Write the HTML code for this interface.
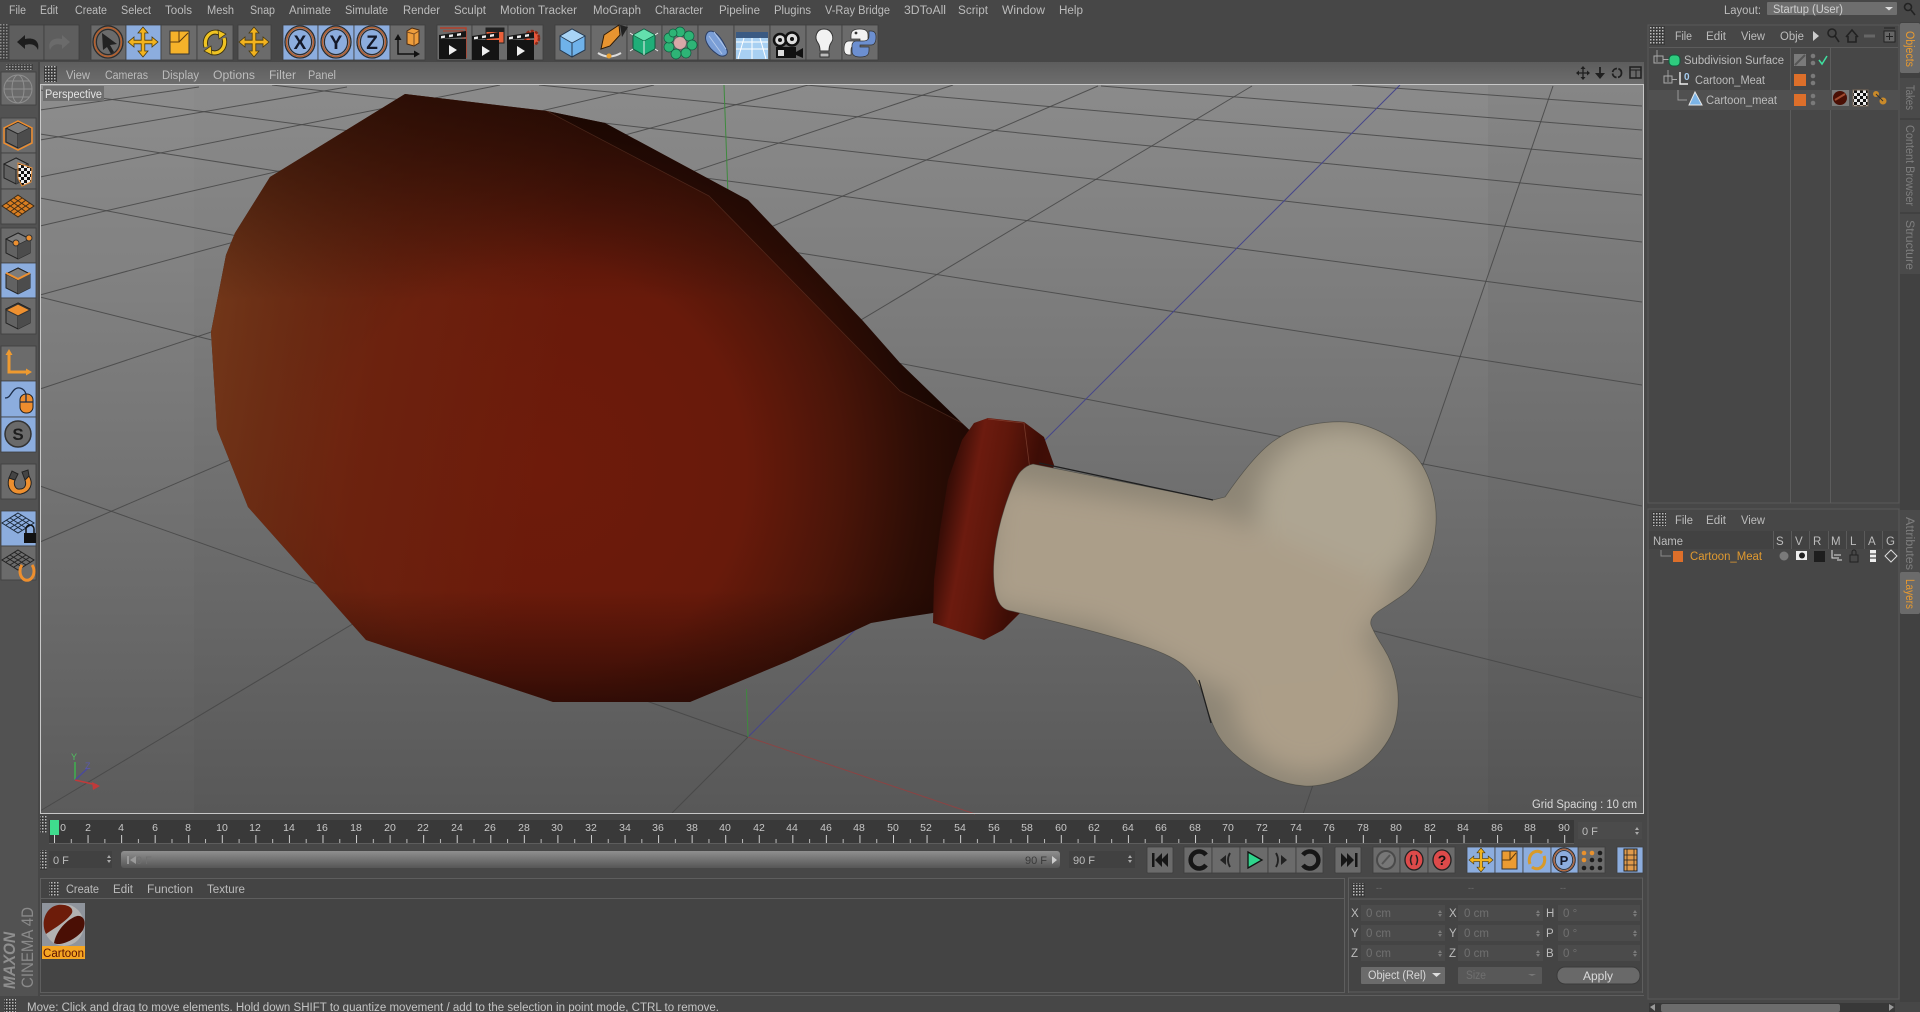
<!DOCTYPE html>
<html lang="en"><head><meta charset="utf-8"><title>Cinema 4D</title>
<style>
html,body{margin:0;padding:0;background:#474747;overflow:hidden;width:1920px;height:1012px}
svg{display:block}
text{font-family:"Liberation Sans",sans-serif;font-size:11.5px;fill:#bcbcbc}
.d{fill:#707070}.k{fill:#c8c8c8;font-size:10.5px}
.b{fill:#6b6b6b;stroke:#3e3e3e;stroke-width:.8}.l{fill:#8cadde;stroke:#3e3e3e;stroke-width:.8}
.g{stroke:#464646;stroke-width:1;fill:none;opacity:.85}
.f{fill:#4b4b4b}.s{fill:none;stroke:#2d2d2d}
</style></head><body>
<svg xmlns="http://www.w3.org/2000/svg" width="1920" height="1012" viewBox="0 0 1920 1012">
<defs>
<pattern id="grip" width="3" height="3" patternUnits="userSpaceOnUse"><rect width="3" height="3" fill="#3a3a3a"/><rect width="1.5" height="1.5" fill="#bdbdbd"/></pattern>
<pattern id="tick" x="54" y="0" width="33.56" height="1012" patternUnits="userSpaceOnUse"><rect x="0" y="835" width="1" height="8" fill="#d0d0d0"/><rect x="16.8" y="839" width="1" height="4" fill="#bcbcbc"/></pattern>
<pattern id="chk" width="6" height="6" patternUnits="userSpaceOnUse"><rect width="6" height="6" fill="#eee"/><rect width="3" height="3" fill="#111"/><rect x="3" y="3" width="3" height="3" fill="#111"/></pattern>
<linearGradient id="vp" x1="0" y1="0" x2="0" y2="1"><stop offset="0" stop-color="#8b8b8b"/><stop offset=".45" stop-color="#757575"/><stop offset="1" stop-color="#585858"/></linearGradient>
<linearGradient id="hd" x1="0" y1="0" x2="0" y2="1"><stop offset="0" stop-color="#5d5d5d"/><stop offset="1" stop-color="#6d6d6d"/></linearGradient>
<linearGradient id="sl" x1="0" y1="0" x2="0" y2="1"><stop offset="0" stop-color="#8f8f8f"/><stop offset="1" stop-color="#565656"/></linearGradient>
<radialGradient id="meat" gradientUnits="userSpaceOnUse" cx="540" cy="470" r="490"><stop offset="0" stop-color="#6e1b0b"/><stop offset=".42" stop-color="#681a0b"/><stop offset=".62" stop-color="#4a1509"/><stop offset=".78" stop-color="#2c0d05"/><stop offset=".92" stop-color="#1c0703"/><stop offset="1" stop-color="#120402"/></radialGradient>
<linearGradient id="mb" gradientUnits="userSpaceOnUse" x1="210" y1="300" x2="560" y2="360"><stop offset="0" stop-color="#7a3c1c" stop-opacity=".9"/><stop offset=".5" stop-color="#702a12" stop-opacity=".5"/><stop offset="1" stop-color="#702a12" stop-opacity="0"/></linearGradient>
<linearGradient id="mt" gradientUnits="userSpaceOnUse" x1="0" y1="94" x2="0" y2="300"><stop offset="0" stop-color="#200903" stop-opacity=".75"/><stop offset="1" stop-color="#200903" stop-opacity="0"/></linearGradient>
<linearGradient id="mz" gradientUnits="userSpaceOnUse" x1="0" y1="590" x2="0" y2="704"><stop offset="0" stop-color="#120402" stop-opacity="0"/><stop offset="1" stop-color="#120402" stop-opacity=".6"/></linearGradient>
<linearGradient id="col" gradientUnits="userSpaceOnUse" x1="925" y1="520" x2="1060" y2="545"><stop offset="0" stop-color="#160603"/><stop offset=".14" stop-color="#3c0e07"/><stop offset=".3" stop-color="#6c1b0f"/><stop offset=".48" stop-color="#5f170b"/><stop offset=".72" stop-color="#3d0d06"/><stop offset="1" stop-color="#480f07"/></linearGradient>
<filter id="bl" x="-30%" y="-30%" width="160%" height="160%"><feGaussianBlur stdDeviation="13"/></filter>
<clipPath id="bone"><path d="M1033 464L1213 500L1225 497Q1254 455 1273 441.500Q1292 428 1311.500 424.500Q1331 421 1346.500 422Q1362 423 1380 431.500Q1398 440 1411 451.500Q1424 463 1431 485Q1438 507 1435.500 530Q1433 553 1423.500 570Q1414 587 1403.500 594.500Q1393 602 1381 609.500Q1369 617 1371 625Q1374 633 1383.500 648Q1393 663 1396.500 681.500Q1400 700 1396.500 718.500Q1393 737 1378.500 753.500Q1364 770 1342.500 778.500Q1321 787 1304.500 786Q1288 785 1271 777.500Q1254 770 1239.500 758.500Q1225 747 1218 735Q1211 723 1205 701.500Q1199 680 1186 667.500Q1173 655 1137 644Q1101 633 1060.500 623Q1020 613 1009 610.500Q998 608 995 590.500Q992 573 995 550Q998 527 1006.500 502Q1015 477 1021 471Q1027 465 1033 464Z"/></clipPath>
<clipPath id="th"><rect x="42" y="903" width="43" height="43"/></clipPath>
<g id="mv"><path d="M0-15 5-9H1.800V-1.800H9V-5L15 0 9 5V1.800H1.800V9H5L0 15-5 9H-1.800V1.800H-9V5L-15 0-9-5V-1.800H-1.800V-9H-5Z" fill="#f2b31e" stroke="#4a3a10" stroke-width=".8"/></g>
<g id="ring"><ellipse rx="15" ry="16" fill="none" stroke="#2c2c2c" stroke-width="1.300"/><ellipse rx="13.400" ry="14.400" fill="none" stroke="#b4602e" stroke-width="1.600"/><ellipse rx="11.600" ry="12.600" fill="none" stroke="#2c2c2c" stroke-width="1.200"/></g>
<g id="clap"><rect x="-14" y="-5" width="27" height="20" fill="#141414"/><path d="M-14-9 13-13V-7L-14-5Z" fill="#161616"/><path d="M-12-8-8-8.600-8-6.200-12-5.600ZM-4-9.200 0-9.800 0-7.400-4-6.800ZM4-10.400 8-11 8-8.600 4-8Z" fill="#eee"/><path d="M-4 1 4 6-4 11Z" fill="#eee"/></g>
<g id="cube"><path d="M0-13 12-7V7L0 13-12 7V-7Z" fill="#626262" stroke="#222" stroke-width="1"/><path d="M0-13 12-7 0-1-12-7Z" fill="#7c7c7c" stroke="#222" stroke-width="1"/><path d="M0-1V13" stroke="#222"/><path d="M0-1 12-7V7L0 13Z" fill="#4c4c4c"/></g>
</defs>

<rect width="1920" height="1012" fill="#474747"/>
<!-- menu -->
<text x="9" y="14" textLength="17" lengthAdjust="spacingAndGlyphs">File</text><text x="40" y="14" textLength="18" lengthAdjust="spacingAndGlyphs">Edit</text><text x="75" y="14" textLength="32" lengthAdjust="spacingAndGlyphs">Create</text><text x="121" y="14" textLength="30" lengthAdjust="spacingAndGlyphs">Select</text><text x="165" y="14" textLength="27" lengthAdjust="spacingAndGlyphs">Tools</text><text x="207" y="14" textLength="27" lengthAdjust="spacingAndGlyphs">Mesh</text><text x="250" y="14" textLength="25" lengthAdjust="spacingAndGlyphs">Snap</text><text x="289" y="14" textLength="42" lengthAdjust="spacingAndGlyphs">Animate</text><text x="345" y="14" textLength="43" lengthAdjust="spacingAndGlyphs">Simulate</text><text x="403" y="14" textLength="37" lengthAdjust="spacingAndGlyphs">Render</text><text x="454" y="14" textLength="32" lengthAdjust="spacingAndGlyphs">Sculpt</text><text x="500" y="14" textLength="77" lengthAdjust="spacingAndGlyphs">Motion Tracker</text><text x="593" y="14" textLength="48" lengthAdjust="spacingAndGlyphs">MoGraph</text><text x="655" y="14" textLength="48" lengthAdjust="spacingAndGlyphs">Character</text><text x="719" y="14" textLength="41" lengthAdjust="spacingAndGlyphs">Pipeline</text><text x="774" y="14" textLength="37" lengthAdjust="spacingAndGlyphs">Plugins</text><text x="825" y="14" textLength="65" lengthAdjust="spacingAndGlyphs">V-Ray Bridge</text><text x="904" y="14" textLength="42" lengthAdjust="spacingAndGlyphs">3DToAll</text><text x="958" y="14" textLength="30" lengthAdjust="spacingAndGlyphs">Script</text><text x="1002" y="14" textLength="43" lengthAdjust="spacingAndGlyphs">Window</text><text x="1059" y="14" textLength="24" lengthAdjust="spacingAndGlyphs">Help</text>
<text x="1724" y="14" textLength="37" lengthAdjust="spacingAndGlyphs">Layout:</text>
<rect x="1767" y="2" width="130" height="13" rx="1" fill="#6e6e6e"/><text x="1773" y="13" textLength="70" lengthAdjust="spacingAndGlyphs" style="fill:#cfcfcf">Startup (User)</text><path d="M1885 7h8l-4 3.500z" fill="#ddd"/>
<g fill="none" stroke="#222" stroke-width="1.600"><circle cx="1908" cy="7" r="3.500"/><path d="M1911 10l4 5"/></g>

<!-- top toolbar -->
<rect x="0" y="24" width="8" height="36" fill="url(#grip)" opacity=".6"/>
<rect x="9" y="25" width="35" height="35" class="b" style="fill:#5e5e5e"/><rect x="44" y="25" width="35" height="35" class="b" style="fill:#5e5e5e"/>
<path d="M17 42 25 35V39C34 37 40 41 38 50 36 45 32 43 25 45V49Z" fill="#1d1d1d"/><path d="M70 42 62 35V39C54 37 47 41 50 50 52 45 56 43 62 45V49Z" fill="#6b6b6b"/>
<rect x="91" y="25" width="35" height="35" class="b"/><rect x="126" y="25" width="35" height="35" class="l"/><rect x="161" y="25" width="36" height="35" class="b"/><rect x="197" y="25" width="36" height="35" class="b"/><rect x="238" y="25" width="33" height="35" class="b"/>
<use href="#ring" x="108" y="42"/><path d="M102 33 117 44 110 45 114 52 111 54 107 47 103 50Z" fill="#222"/>
<use href="#mv" x="143" y="42"/><rect x="170" y="31" width="19" height="23" fill="#f5b22a" stroke="#333"/><path d="M170 42h9V31M179 42l9-9" stroke="#5a3a10" fill="none"/>
<g fill="none" stroke="#3a3010" stroke-width="5"><path d="M221 34A10 11 0 0 0 206 47"/><path d="M209 51A10 11 0 0 0 224 38"/></g><g fill="none" stroke="#efc322" stroke-width="3.200"><path d="M221 34A10 11 0 0 0 206 47"/><path d="M209 51A10 11 0 0 0 224 38"/></g><path d="M218 30 226 34 219 39ZM212 55 204 51 211 46Z" fill="#efc322" stroke="#3a3010" stroke-width=".7"/>
<use href="#mv" x="254" y="42"/>
<rect x="283" y="25" width="35" height="35" class="l"/><rect x="318" y="25" width="36" height="35" class="l"/><rect x="354" y="25" width="36" height="35" class="l"/><rect x="390" y="25" width="35" height="35" class="b"/>
<use href="#ring" x="300" y="42"/><use href="#ring" x="336" y="42"/><use href="#ring" x="372" y="42"/>
<text x="300" y="49" text-anchor="middle" style="font-size:19px;font-weight:700;fill:#14192a">X</text><text x="336" y="49" text-anchor="middle" style="font-size:19px;font-weight:700;fill:#14192a">Y</text><text x="372" y="49" text-anchor="middle" style="font-size:19px;font-weight:700;fill:#14192a">Z</text>
<path d="M398 38V54H414" fill="none" stroke="#111" stroke-width="1.500"/><path d="M398 34l-3.500 6h7zM420 54l-6-3.500v7z" fill="#111"/><path d="M407 31 412 28 419 30V43L414 46 407 44Z" fill="#ee9d3c" stroke="#4a2a10"/><path d="M407 32l7 2 5-3M414 34V46" fill="none" stroke="#7a4a20"/>
<rect x="437" y="25" width="35" height="35" class="b"/><rect x="472" y="25" width="36" height="35" class="b"/><rect x="508" y="25" width="35" height="35" class="b"/>
<path d="M440 28h26v30" fill="none" stroke="#b5402a" stroke-width="1.500"/><path d="M443 31h20v26" fill="none" stroke="#b5402a" stroke-width="1"/>
<use href="#clap" x="453" y="44"/><rect x="486" y="28" width="18" height="15" fill="#e8603a" stroke="#222"/><rect x="486" y="28" width="18" height="4" fill="#222"/><use href="#clap" x="486" y="45"/>
<circle cx="532" cy="38" r="7" fill="#e8563a" stroke="#8a2a18" stroke-width="2.500" stroke-dasharray="3 1.500"/><circle cx="532" cy="38" r="2.500" fill="#6b6b6b"/><use href="#clap" x="521" y="45"/>
<rect x="555" y="25" width="36" height="35" class="b"/><rect x="591" y="25" width="36" height="35" class="b"/><rect x="627" y="25" width="35" height="35" class="b"/><rect x="662" y="25" width="36" height="35" class="b"/><rect x="698" y="25" width="36" height="35" class="b"/><rect x="734" y="25" width="36" height="35" class="b"/><rect x="770" y="25" width="36" height="35" class="b"/><rect x="806" y="25" width="36" height="35" class="b"/><rect x="842" y="25" width="36" height="35" class="b"/>
<path d="M572 29 585 36V50L572 57 560 50V36Z" fill="#6fb2ea" stroke="#24384f"/><path d="M572 29 585 36 572 43 560 36Z" fill="#a8d4f6" stroke="#24384f" stroke-width=".8"/><path d="M572 43V57" stroke="#24384f"/>
<path d="M598 53Q609 60 621 53" fill="none" stroke="#ddd" stroke-width="2"/><circle cx="609" cy="56" r="2.500" fill="#e8a030"/><path d="M619 25 604 35 601 49 610 46 620 35Z" fill="#e89430" stroke="#2b1a08"/><path d="M620 25 628 27 622 37Z" fill="#222"/>
<path d="M644 29 655 35V49L644 55 633 49V35Z" fill="#1fae78" stroke="#0f5a3e"/><path d="M644 29 655 35 644 41 633 35Z" fill="#63e0ad" stroke="#0f5a3e" stroke-width=".7"/><path d="M644 41V55M633 35l-3-2M655 35l3-2M633 49l-3 2M655 49l3 2" stroke="#eee"/>
<g fill="#2eb476" stroke="#0f5a3e" stroke-width=".7"><circle cx="680" cy="32" r="5"/><circle cx="689" cy="36" r="5"/><circle cx="692" cy="45" r="5"/><circle cx="686" cy="53" r="5"/><circle cx="676" cy="54" r="5"/><circle cx="669" cy="47" r="5"/><circle cx="669" cy="38" r="5"/><circle cx="673" cy="33" r="4"/></g><circle cx="680" cy="43" r="6" fill="#d8a8a8"/>
<path d="M708 32C714 28 722 38 727 50 729 56 722 58 717 54 708 48 702 38 708 32Z" fill="#7a9ed6" stroke="#2b3e63"/><path d="M709 36 722 54M714 32 726 49" stroke="#b2c8ea" fill="none"/>
<rect x="736" y="32" width="32" height="27" fill="#a8d0f2"/><rect x="736" y="32" width="32" height="6" fill="#3a5a82"/><path d="M736 42H768M736 49H768M752 38V59M744 38 738 59M760 38 766 59" stroke="#fff" fill="none"/>
<circle cx="780" cy="40" r="6" fill="#ddd" stroke="#111" stroke-width="2.500"/><circle cx="792" cy="39" r="6.500" fill="#ddd" stroke="#111" stroke-width="2.500"/><circle cx="780" cy="40" r="2" fill="#111"/><circle cx="792" cy="39" r="2" fill="#111"/><rect x="776" y="47" width="20" height="11" fill="#111"/><path d="M796 52 803 48V58L796 55Z" fill="#111"/><rect x="778" y="50" width="6" height="6" fill="#ddd"/>
<path d="M824 29C816 29 814 38 818 43 820 46 820 49 820 51H829C829 49 829 46 831 43 835 38 832 29 824 29Z" fill="#f2f2f2" stroke="#333"/><path d="M820 53H829V57H820Z" fill="#bbb" stroke="#333"/>
<path d="M860 29C852 29 851 32 851 36V39H860V41H849C845 41 844 45 844 49 844 53 846 55 849 55H851V50C851 47 853 45 857 45H864C866 45 868 43 868 41V35C868 31 865 29 860 29Z" fill="#f2f2f2" stroke="#333" stroke-width=".7"/><path d="M860 57C868 57 869 54 869 50V47H860V45H871C875 45 876 41 876 37 876 33 874 31 871 31H869V36C869 39 867 41 863 41H856C854 41 852 43 852 45V51C852 55 855 57 860 57Z" fill="#6c8fd0" stroke="#333" stroke-width=".7"/><circle cx="856" cy="33" r="1.400" fill="#333"/>

<!-- viewport header -->
<rect x="40" y="62" width="1604" height="22" fill="url(#hd)"/>
<rect x="44" y="66" width="13" height="16" fill="url(#grip)"/>
<text x="66" y="79" textLength="24" lengthAdjust="spacingAndGlyphs">View</text><text x="105" y="79" textLength="43" lengthAdjust="spacingAndGlyphs">Cameras</text><text x="162" y="79" textLength="37" lengthAdjust="spacingAndGlyphs">Display</text><text x="213" y="79" textLength="42" lengthAdjust="spacingAndGlyphs">Options</text><text x="269" y="79" textLength="27" lengthAdjust="spacingAndGlyphs">Filter</text><text x="308" y="79" textLength="28" lengthAdjust="spacingAndGlyphs">Panel</text>
<path d="M1583 68v10M1578 73h10" stroke="#1f1f1f" stroke-width="1.300" fill="none"/><path d="M1583 66l-2.500 3h5zM1583 80l-2.500-3h5zM1576 73l3-2.500v5zM1590 73l-3-2.500v5z" fill="#1f1f1f"/>
<path d="M1600 67v7" stroke="#1f1f1f" stroke-width="1.800" fill="none"/><path d="M1595 73h10l-5 6z" fill="#1f1f1f"/>
<circle cx="1617" cy="73" r="4.500" fill="none" stroke="#1f1f1f" stroke-width="1.800" stroke-dasharray="6 1.500"/><rect x="1630" y="67" width="11" height="11" fill="none" stroke="#1f1f1f" stroke-width="1.500"/><path d="M1630 70h11M1636 70v8" stroke="#1f1f1f"/>

<!-- viewport -->
<rect x="40" y="84" width="1604" height="730" fill="url(#vp)"/>
<rect x="41" y="85" width="153" height="728" fill="#fff" opacity=".025"/><rect x="1488" y="85" width="155" height="728" fill="#000" opacity=".035"/>
<path class="g" d="M1352 85 1642 106M1101 86 1642 130M806 85 1642 159M539 85 1642 195M272 85 1642 242M40 90 1642 302M40 134 1642 385M40 198 1642 506M40 297 1642 698M40 486 748 737"/>
<path class="g" d="M1553 86 1303 814M1252 86 40 811M1098 86 40 542M953 85 40 389M808 85 40 295M654 85 40 226M500 85 40 177M347 87 40 140M199 87 40 110M748 737 672 813"/>
<path d="M1400 85 748 737" stroke="#46468a" stroke-width="1" fill="none"/><path d="M748 737 975 814" stroke="#8a4444" stroke-width="1" fill="none"/>
<path d="M724 85 729 222M746.500 689 748 737" stroke="#3e8a3e" stroke-width="1" fill="none"/>

<!-- meat -->
<polygon points="405,94 547,111 605,123 748,200 863,321 900,363 962,423 980,440 960,600 933,613 900,618 871,623 791,660 690,702 553,702 366,640 248,507 217,429 211,332 226,255 235,233 270,177" fill="url(#meat)"/>
<polygon points="405,94 547,111 605,123 748,200 863,321 900,363 962,423 980,440 960,600 933,613 900,618 871,623 791,660 690,702 553,702 366,640 248,507 217,429 211,332 226,255 235,233 270,177" fill="url(#mb)"/>
<polygon points="405,94 547,111 605,123 748,200 863,321 900,363 962,423 980,440 960,600 933,613 900,618 871,623 791,660 690,702 553,702 366,640 248,507 217,429 211,332 226,255 235,233 270,177" fill="url(#mt)"/>
<polygon points="405,94 547,111 605,123 748,200 863,321 900,363 962,423 980,440 960,600 933,613 900,618 871,623 791,660 690,702 553,702 366,640 248,507 217,429 211,332 226,255 235,233 270,177" fill="url(#mz)"/>
<polygon points="547,111 605,123 748,200 863,321 900,363 962,423 900,391 709,196" fill="#000" opacity=".3"/>
<path d="M547 111 709 196 900 391 962 423" fill="none" stroke="#7a4a3a" stroke-width=".8" opacity=".4"/>
<polygon points="974,423 988,418 1024,422 1044,437 1054,465 1020,613 1003,630 984,640 933,623 934,580 940,530 948,480 962,440" fill="url(#col)"/>
<path d="M988 419 1024 423 1030 470" fill="none" stroke="#a0604c" stroke-width=".8" opacity=".5"/>
<!-- bone -->
<g clip-path="url(#bone)"><rect x="980" y="410" width="470" height="390" fill="#8d8575"/><g filter="url(#bl)"><circle cx="1340" cy="512" r="84" fill="#aea592"/><ellipse cx="1308" cy="695" rx="76" ry="78" fill="#ac9e88"/><polygon points="995,480 1225,515 1400,590 1330,680 1220,690 1100,625 985,605" fill="#ab9e89"/></g></g>
<path d="M1033 464L1213 500L1225 497Q1254 455 1273 441.500Q1292 428 1311.500 424.500Q1331 421 1346.500 422Q1362 423 1380 431.500Q1398 440 1411 451.500Q1424 463 1431 485Q1438 507 1435.500 530Q1433 553 1423.500 570Q1414 587 1403.500 594.500Q1393 602 1381 609.500Q1369 617 1371 625Q1374 633 1383.500 648Q1393 663 1396.500 681.500Q1400 700 1396.500 718.500Q1393 737 1378.500 753.500Q1364 770 1342.500 778.500Q1321 787 1304.500 786Q1288 785 1271 777.500Q1254 770 1239.500 758.500Q1225 747 1218 735Q1211 723 1205 701.500Q1199 680 1186 667.500Q1173 655 1137 644Q1101 633 1060.500 623Q1020 613 1009 610.500Q998 608 995 590.500Q992 573 995 550Q998 527 1006.500 502Q1015 477 1021 471Q1027 465 1033 464Z" fill="none" stroke="#3c3c36" stroke-width=".7" opacity=".6"/>
<path d="M1039 463 1213 500M1199 680 1211 723" stroke="#1f1f1f" stroke-width="1.300" fill="none"/>

<rect x="40.500" y="84.500" width="1603" height="729" fill="none" stroke="#c8c8c8"/>
<rect x="43" y="86" width="61" height="15" fill="#6e6e6e"/><text x="45" y="98" style="fill:#e4e4e4" textLength="57" lengthAdjust="spacingAndGlyphs">Perspective</text>
<rect x="1530" y="797" width="112" height="15" fill="#565656"/><text x="1532" y="808" style="fill:#dadada" textLength="105" lengthAdjust="spacingAndGlyphs">Grid Spacing : 10 cm</text>
<path d="M75 780V762" stroke="#3fb24f" stroke-width="1.500"/><path d="M75 780 88 768" stroke="#4a4a9a" stroke-width="1.500"/><path d="M75 780 97 785" stroke="#c03a3a" stroke-width="1.500"/><path d="M92 782 100 786 93 790Z" fill="#c03a3a"/>
<text x="71" y="760" style="font-size:9px;fill:#4fc25f">Y</text><text x="85" y="769" style="font-size:9px;fill:#5a5aaa">Z</text>

<!-- left column -->
<rect x="0" y="62" width="38" height="934" fill="#525252"/>
<rect x="6" y="64" width="27" height="6" fill="url(#grip)" opacity=".7"/>
<rect x="1" y="72" width="35" height="33" class="b"/>
<g fill="none" stroke="#8f8f8f"><circle cx="18" cy="89" r="14"/><ellipse cx="18" cy="89" rx="6" ry="14"/><path d="M4 89H32M7 81H29M7 97H29"/></g>
<rect x="1" y="118" width="35" height="35" class="b"/><rect x="1" y="153" width="35" height="36" class="b"/><rect x="1" y="189" width="35" height="35" class="b"/>
<use href="#cube" x="18" y="135"/><path d="M18 121 32 128V143L18 150 4 143V128Z" fill="none" stroke="#ee8d2e" stroke-width="1.500"/>
<use href="#cube" x="16" y="171"/><path d="M18 163 32 168 31 182 22 186 18 178Z" fill="url(#chk)" stroke="#e8903a"/>
<path d="M18 195 34 206 18 217 2 206Z" fill="#d87d20" stroke="#3a2a18"/><path d="M10 200 26 212M14 198 30 209M6 203 22 214M26 200 10 212M22 198 6 209M30 203 14 214" stroke="#3a2a18" stroke-width=".8"/>
<rect x="1" y="228" width="35" height="35" class="b"/><rect x="1" y="263" width="35" height="35" class="l"/><rect x="1" y="298" width="35" height="36" class="b"/>
<use href="#cube" x="18" y="246"/><circle cx="16" cy="243" r="3" fill="#ee9030" stroke="#333"/><circle cx="29" cy="238" r="3" fill="#ee9030" stroke="#333"/>
<use href="#cube" x="18" y="281"/><path d="M6 273 18 279 30 273" fill="none" stroke="#ee9030" stroke-width="2"/>
<use href="#cube" x="18" y="316"/><path d="M18 304 30 310 18 316 6 310Z" fill="#ee9030" stroke="#333"/>
<rect x="1" y="346" width="35" height="35" class="b"/><rect x="1" y="381" width="35" height="36" class="l"/><rect x="1" y="417" width="35" height="35" class="l"/>
<path d="M9 353V372H27" fill="none" stroke="#ee9a30" stroke-width="3"/><path d="M9 349l-3.500 6h7zM32 372l-6-3.500v7z" fill="#ee9a30"/>
<rect x="20" y="394" width="13" height="19" rx="6" fill="#ee8d2e" stroke="#222"/><path d="M20 402H33M26 394V402M26 394C24 388 18 386 14 390 10 394 10 398 5 398" fill="none" stroke="#1d2e4a" stroke-width="1.300"/>
<circle cx="18" cy="434" r="13" fill="#6a6a6a" stroke="#333" stroke-width="1.500"/><text x="18" y="440" text-anchor="middle" style="font-size:17px;font-weight:700;fill:#1d1d1d">S</text>
<rect x="1" y="464" width="35" height="35" class="b"/>
<path d="M9 478C6 488 12 495 21 494 30 492 34 484 29 476L25 480C27 486 24 489 20 489 16 490 13 485 15 480Z" fill="#ee8f2e" stroke="#222"/><path d="M9 478 12 471 18 474 15 480ZM25 480 22 472 28 470 29 476Z" fill="#444" stroke="#222"/>
<rect x="1" y="511" width="35" height="35" class="l"/><rect x="1" y="546" width="35" height="34" class="b"/>
<g fill="none" stroke="#1c2a3a"><path d="M18 513 34 523 18 533 2 523ZM10 518 26 528M14 515 30 525M6 520 22 530M26 518 10 528M22 515 6 525M30 520 14 530"/></g>
<rect x="24" y="533" width="12" height="10" fill="#111"/><path d="M26 533V529A4 4 0 0 1 34 529V533" fill="none" stroke="#111" stroke-width="1.500"/>
<g fill="none" stroke="#222"><path d="M18 550 34 560 18 570 2 560ZM10 555 26 565M14 552 30 562M6 557 22 567M26 555 10 565M22 552 6 562M30 557 14 567"/></g>
<path d="M22 565A7 9 0 1 0 32 565" fill="none" stroke="#ee8f2e" stroke-width="3"/>
<text transform="translate(15,989) rotate(-90)" style="font-size:17px;font-weight:700;font-style:italic;fill:#8e8e8e" textLength="57" lengthAdjust="spacingAndGlyphs">MAXON</text>
<text transform="translate(33,988) rotate(-90)" style="font-size:17px;fill:#8a8a8a" textLength="81" lengthAdjust="spacingAndGlyphs">CINEMA 4D</text>

<!-- timeline -->
<rect x="40" y="816" width="7" height="17" fill="url(#grip)"/>
<rect x="49" y="820" width="1525" height="24" fill="#393939"/>
<rect x="49" y="843" width="1525" height="1" fill="#5d5d5d"/>
<rect x="49" y="820" width="1525" height="24" fill="url(#tick)"/>
<rect x="50" y="820" width="9" height="15" fill="#3fdc8e"/>
<g class="nums" text-anchor="middle"><text class="k" x="63" y="831">0</text><text class="k" x="88" y="831">2</text><text class="k" x="121" y="831">4</text><text class="k" x="155" y="831">6</text><text class="k" x="188" y="831">8</text><text class="k" x="222" y="831">10</text><text class="k" x="255" y="831">12</text><text class="k" x="289" y="831">14</text><text class="k" x="322" y="831">16</text><text class="k" x="356" y="831">18</text><text class="k" x="390" y="831">20</text><text class="k" x="423" y="831">22</text><text class="k" x="457" y="831">24</text><text class="k" x="490" y="831">26</text><text class="k" x="524" y="831">28</text><text class="k" x="557" y="831">30</text><text class="k" x="591" y="831">32</text><text class="k" x="625" y="831">34</text><text class="k" x="658" y="831">36</text><text class="k" x="692" y="831">38</text><text class="k" x="725" y="831">40</text><text class="k" x="759" y="831">42</text><text class="k" x="792" y="831">44</text><text class="k" x="826" y="831">46</text><text class="k" x="859" y="831">48</text><text class="k" x="893" y="831">50</text><text class="k" x="926" y="831">52</text><text class="k" x="960" y="831">54</text><text class="k" x="994" y="831">56</text><text class="k" x="1027" y="831">58</text><text class="k" x="1061" y="831">60</text><text class="k" x="1094" y="831">62</text><text class="k" x="1128" y="831">64</text><text class="k" x="1161" y="831">66</text><text class="k" x="1195" y="831">68</text><text class="k" x="1228" y="831">70</text><text class="k" x="1262" y="831">72</text><text class="k" x="1296" y="831">74</text><text class="k" x="1329" y="831">76</text><text class="k" x="1363" y="831">78</text><text class="k" x="1396" y="831">80</text><text class="k" x="1430" y="831">82</text><text class="k" x="1463" y="831">84</text><text class="k" x="1497" y="831">86</text><text class="k" x="1530" y="831">88</text><text class="k" x="1564" y="831">90</text></g>
<rect x="1578" y="822" width="64" height="17" class="f"/><text x="1582" y="835" style="font-size:11px">0 F</text><path d="M1637 827l2 3h-4zM1637 835l2-3h-4z" fill="#aaa"/>

<rect x="40" y="850" width="7" height="20" fill="url(#grip)"/>
<rect x="49" y="851" width="63" height="17" fill="#414141"/><text x="53" y="864" style="font-size:11px">0 F</text><path d="M109 855l2 3h-4zM109 863l2-3h-4z" fill="#aaa"/>
<rect x="121" y="851" width="939" height="17" rx="3" fill="url(#sl)"/><path d="M127 856h2v8h-2zM136 856v8l-6-4z" fill="#9a9a9a"/><text x="136" y="864" style="font-size:11px;fill:#707070">0 F</text><text x="1025" y="864" style="font-size:11px;fill:#3a3a3a">90 F</text><path d="M1052 856v8l5-4z" fill="#ccc"/>
<rect x="1069" y="851" width="66" height="17" fill="#414141"/><text x="1073" y="864" style="font-size:11px">90 F</text><path d="M1130 855l2 3h-4zM1130 863l2-3h-4z" fill="#aaa"/>
<g class="b"><rect x="1147" y="847" width="26" height="26" rx="1"/><rect x="1184" y="847" width="28" height="26"/><rect x="1212" y="847" width="28" height="26"/><rect x="1240" y="847" width="28" height="26"/><rect x="1268" y="847" width="28" height="26"/><rect x="1296" y="847" width="27" height="26"/><rect x="1335" y="847" width="26" height="26" rx="1"/><rect x="1373" y="847" width="27" height="26"/><rect x="1400" y="847" width="28" height="26"/><rect x="1428" y="847" width="27" height="26"/><rect x="1578" y="847" width="27" height="26"/></g>
<g class="l"><rect x="1467" y="847" width="28" height="26"/><rect x="1495" y="847" width="28" height="26"/><rect x="1523" y="847" width="28" height="26"/><rect x="1551" y="847" width="27" height="26"/><rect x="1617" y="847" width="26" height="26"/></g>
<path d="M1152 853h2.500v14H1152zM1155 860 1162 853V859L1168 853V867L1162 861V867Z" fill="#161616"/>
<path d="M1206 855A8.500 8.500 0 1 0 1206 865" fill="none" stroke="#161616" stroke-width="4.500"/>
<path d="M1220 860 1226 855V865Z" fill="#222"/><path d="M1230 853Q1226 860 1230 867" fill="none" stroke="#222" stroke-width="1.800"/>
<path d="M1248 852 1262 860 1248 868Z" fill="#2fd48c" stroke="#111" stroke-width="1.300"/>
<path d="M1287 860 1281 855V865Z" fill="#222"/><path d="M1276 853Q1280 860 1276 867" fill="none" stroke="#222" stroke-width="1.800"/>
<path d="M1303 855A8.500 8.500 0 1 1 1303 865" fill="none" stroke="#161616" stroke-width="4.500"/>
<path d="M1355 853h2.500v14H1355zM1354 860 1347 853V859L1341 853V867L1347 861V867Z" fill="#161616"/>
<circle cx="1386" cy="860" r="9" fill="#777" stroke="#4a4a4a" stroke-width="2"/><path d="M1382 864 1390 855" stroke="#555" stroke-width="2"/>
<ellipse cx="1414" cy="860" rx="9" ry="10" fill="#dd4a4a" stroke="#222" stroke-width="1.300"/><path d="M1412 855Q1409 860 1412 865M1416 855Q1419 860 1416 865" fill="none" stroke="#222" stroke-width="1.500"/>
<ellipse cx="1442" cy="860" rx="9" ry="10" fill="#dd4a4a" stroke="#222" stroke-width="1.300"/><text x="1442" y="865" text-anchor="middle" style="font-size:14px;font-weight:700;fill:#111">?</text>
<use href="#mv" transform="translate(1481,860) scale(.8)"/><rect x="1502" y="851" width="15" height="18" fill="#eb9b32" stroke="#333"/><path d="M1502 860h8v-9M1510 860l6-7" stroke="#5a3a10" fill="none"/>
<path d="M1542 853A8 9 0 0 0 1530 864M1532 867A8 9 0 0 0 1544 856" fill="none" stroke="#d89a2a" stroke-width="3"/>
<use href="#ring" transform="translate(1564,860) scale(.75)"/><text x="1564" y="865" text-anchor="middle" style="font-size:13px;font-weight:700;fill:#14192a">P</text>
<g fill="#e8912e"><circle cx="1584" cy="853" r="2.300"/><circle cx="1592" cy="853" r="2.300"/><circle cx="1584" cy="860" r="2.300"/></g><g fill="#1d1d1d"><circle cx="1600" cy="853" r="2.300"/><circle cx="1592" cy="860" r="2.300"/><circle cx="1600" cy="860" r="2.300"/><circle cx="1584" cy="868" r="2.300"/><circle cx="1592" cy="868" r="2.300"/><circle cx="1600" cy="868" r="2.300"/></g>
<rect x="1624" y="849" width="13" height="22" fill="#e09a4a" stroke="#222"/><path d="M1624 855h13M1624 860h13M1624 865h13M1627 849v22M1634 849v22" stroke="#222" fill="none" stroke-width=".8"/>

<!-- material panel -->
<rect x="40" y="878" width="1304" height="115" fill="#444"/><rect x="40" y="878" width="1304" height="1" fill="#5e5e5e"/><rect x="40" y="898" width="1304" height="1" fill="#5e5e5e"/><rect x="40" y="878" width="1" height="115" fill="#5e5e5e"/><rect x="40" y="992" width="1304" height="1" fill="#5e5e5e"/>
<rect x="49" y="882" width="10" height="14" fill="url(#grip)"/>
<text x="66" y="893" textLength="33" lengthAdjust="spacingAndGlyphs">Create</text><text x="113" y="893" textLength="20" lengthAdjust="spacingAndGlyphs">Edit</text><text x="147" y="893" textLength="46" lengthAdjust="spacingAndGlyphs">Function</text><text x="207" y="893" textLength="38" lengthAdjust="spacingAndGlyphs">Texture</text>
<rect x="42" y="903" width="43" height="43" fill="#8f949c"/><g clip-path="url(#th)"><ellipse cx="64" cy="925" rx="20" ry="21" fill="#b2b2b2"/><path d="M46 934C40 922 46 907 58 905 66 904 74 907 72 913 68 920 55 928 46 934Z" fill="#6d1c0a"/><path d="M54 943C60 947 77 939 83 930 87 921 83 915 77 916 67 919 56 931 54 943Z" fill="#4a0f05"/></g>
<rect x="42" y="946" width="43" height="13" fill="#f5a623"/><text x="43" y="957" style="fill:#5a1000" textLength="41" lengthAdjust="spacingAndGlyphs">Cartoon</text>

<!-- coordinates -->
<rect x="1348" y="878" width="295" height="115" fill="#444"/><path d="M1348 878h295M1344.500 878v115M1348.500 878v115M1348 992h295M1642.500 878v115M1350 899h292" stroke="#5e5e5e" fill="none"/>
<rect x="1352" y="883" width="13" height="14" fill="url(#grip)"/>
<text x="1376" y="891" class="d" style="font-size:9px">--</text><text x="1468" y="891" class="d" style="font-size:9px">--</text><text x="1560" y="891" class="d" style="font-size:9px">--</text>
<g class="f"><rect x="1361" y="905" width="84" height="16"/><rect x="1458" y="905" width="85" height="16"/><rect x="1558" y="905" width="82" height="16"/><rect x="1361" y="925" width="84" height="16"/><rect x="1458" y="925" width="85" height="16"/><rect x="1558" y="925" width="82" height="16"/><rect x="1361" y="945" width="84" height="16"/><rect x="1458" y="945" width="85" height="16"/><rect x="1558" y="945" width="82" height="16"/></g>
<text x="1351" y="917">X</text><text x="1449" y="917">X</text><text x="1546" y="917">H</text><text x="1351" y="937">Y</text><text x="1449" y="937">Y</text><text x="1546" y="937">P</text><text x="1351" y="957">Z</text><text x="1449" y="957">Z</text><text x="1546" y="957">B</text>
<g style="font-size:11px"><text class="d" x="1366" y="917">0 cm</text><text class="d" x="1464" y="917">0 cm</text><text class="d" x="1563" y="917">0 °</text><text class="d" x="1366" y="937">0 cm</text><text class="d" x="1464" y="937">0 cm</text><text class="d" x="1563" y="937">0 °</text><text class="d" x="1366" y="957">0 cm</text><text class="d" x="1464" y="957">0 cm</text><text class="d" x="1563" y="957">0 °</text></g>
<path d="M1440 910l2 3h-4zM1440 917l2-3h-4zM1538 910l2 3h-4zM1538 917l2-3h-4zM1635 910l2 3h-4zM1635 917l2-3h-4zM1440 930l2 3h-4zM1440 937l2-3h-4zM1538 930l2 3h-4zM1538 937l2-3h-4zM1635 930l2 3h-4zM1635 937l2-3h-4zM1440 950l2 3h-4zM1440 957l2-3h-4zM1538 950l2 3h-4zM1538 957l2-3h-4zM1635 950l2 3h-4zM1635 957l2-3h-4z" fill="#7a7a7a"/>
<rect x="1361" y="967" width="84" height="17" rx="1" fill="#6b6b6b"/><text x="1368" y="979" style="fill:#d8d8d8" textLength="58" lengthAdjust="spacingAndGlyphs">Object (Rel)</text><path d="M1432 973h9l-4.500 4z" fill="#ddd"/>
<rect x="1458" y="967" width="84" height="17" rx="1" fill="#585858"/><text x="1466" y="979" class="d" textLength="20" lengthAdjust="spacingAndGlyphs">Size</text><path d="M1528 974h8l-4 2z" fill="#777"/>
<rect x="1557" y="967" width="83" height="17" rx="8" fill="#696969" stroke="#3a3a3a"/><text x="1583" y="980" style="fill:#dadada" textLength="30" lengthAdjust="spacingAndGlyphs">Apply</text>

<!-- status -->
<rect x="0" y="996" width="1648" height="16" fill="#474747"/><rect x="40" y="995" width="1604" height="1" fill="#5e5e5e"/>
<rect x="4" y="999" width="12" height="13" fill="url(#grip)"/>
<text x="27" y="1011" textLength="692" lengthAdjust="spacingAndGlyphs" style="fill:#c4c4c4">Move: Click and drag to move elements. Hold down SHIFT to quantize movement / add to the selection in point mode, CTRL to remove.</text>

<!-- object manager -->
<rect x="1648" y="25" width="251" height="478" fill="#474747" stroke="#5a5a5a"/>
<rect x="1650" y="26" width="15" height="19" fill="url(#grip)"/>
<text x="1675" y="40" textLength="17" lengthAdjust="spacingAndGlyphs">File</text><text x="1706" y="40" textLength="20" lengthAdjust="spacingAndGlyphs">Edit</text><text x="1741" y="40" textLength="24" lengthAdjust="spacingAndGlyphs">View</text><text x="1780" y="40" textLength="24" lengthAdjust="spacingAndGlyphs">Obje</text><path d="M1813 31l6 5-6 5z" fill="#ccc"/>
<g fill="none" stroke="#222" stroke-width="1.600"><circle cx="1832" cy="33" r="4"/><path d="M1835 36l4 6"/><path d="M1846 37 1852 30 1858 37M1848 36V42H1856V36"/></g><path d="M1864 36h11" stroke="#666" stroke-width="3"/><rect x="1884" y="31" width="11" height="11" fill="#666" stroke="#222"/><path d="M1886 36.500h7M1889.500 33v7M1884 28h11" stroke="#222"/>
<path d="M1649 47.500H1898M1790.500 48V503M1830.500 48V503" stroke="#5c5c5c" fill="none"/>
<rect x="1649" y="90" width="249" height="20" fill="#505050"/>
<path d="M1657 50v12M1668 70v12M1678 90v10h9" stroke="#999" fill="none"/>
<rect x="1654" y="56" width="9" height="7" fill="none" stroke="#aaa"/><rect x="1664" y="76" width="8" height="7" fill="none" stroke="#aaa"/><path d="M1663 59.500h6M1672 79.500h5" stroke="#aaa"/>
<rect x="1669" y="55" width="11" height="11" rx="4" fill="#2ecb7e" stroke="#0f5a3e"/>
<path d="M1680 72v12h8" fill="none" stroke="#eee" stroke-width="1.400"/><text x="1684" y="80" style="font-size:10px;font-weight:700;fill:#a6cdf0">0</text>
<path d="M1695 92 1689 105H1702Z" fill="#7cb4e6" stroke="#e8e8e8"/>
<text x="1684" y="64" textLength="100" lengthAdjust="spacingAndGlyphs">Subdivision Surface</text><text x="1695" y="84" textLength="70" lengthAdjust="spacingAndGlyphs">Cartoon_Meat</text><text x="1706" y="104" textLength="71" lengthAdjust="spacingAndGlyphs">Cartoon_meat</text>
<rect x="1794" y="54" width="12" height="12" fill="#7a7a7a"/><path d="M1795 65 1805 55" stroke="#555" stroke-width="2"/><rect x="1794" y="74" width="12" height="12" fill="#dd6f2a"/><rect x="1794" y="94" width="12" height="12" fill="#dd6f2a"/>
<g fill="#7a7a7a"><circle cx="1813" cy="56" r="2.300"/><circle cx="1813" cy="63" r="2.300"/><circle cx="1813" cy="76" r="2.300"/><circle cx="1813" cy="83" r="2.300"/><circle cx="1813" cy="96" r="2.300"/><circle cx="1813" cy="103" r="2.300"/></g>
<path d="M1819 60 1822 64 1827 56" fill="none" stroke="#3fe0a0" stroke-width="1.500"/>
<rect x="1832" y="90" width="17" height="16" fill="#7a7a7a"/><circle cx="1840" cy="98" r="7" fill="#4a0f05"/><path d="M1835 100 1845 94" stroke="#a04a30" stroke-width="2"/>
<rect x="1853" y="90" width="15" height="16" fill="url(#chk)" stroke="#7a6a5a"/>
<circle cx="1876" cy="94" r="3" fill="#c98a2a"/><circle cx="1883" cy="101" r="3.500" fill="#c98a2a"/><path d="M1876 94 1883 101" stroke="#333"/>

<!-- layer manager -->
<rect x="1648" y="509" width="251" height="490" fill="#474747" stroke="#5a5a5a"/>
<rect x="1652" y="512" width="14" height="14" fill="url(#grip)"/>
<text x="1675" y="524" textLength="18" lengthAdjust="spacingAndGlyphs">File</text><text x="1706" y="524" textLength="20" lengthAdjust="spacingAndGlyphs">Edit</text><text x="1741" y="524" textLength="24" lengthAdjust="spacingAndGlyphs">View</text>
<rect x="1649" y="531" width="249" height="18" fill="#424242"/>
<path d="M1773.500 531v18M1791.500 531v18M1809.500 531v18M1828.500 531v18M1846.500 531v18M1864.500 531v18M1882.500 531v18" stroke="#5a5a5a"/>
<text x="1653" y="545" textLength="30" lengthAdjust="spacingAndGlyphs">Name</text><text x="1776" y="545">S</text><text x="1795" y="545">V</text><text x="1813" y="545">R</text><text x="1831" y="545">M</text><text x="1850" y="545">L</text><text x="1868" y="545">A</text><text x="1886" y="545">G</text>
<path d="M1661 550v6h10" stroke="#888" fill="none"/><rect x="1673" y="551" width="10" height="11" fill="#dd6f2a"/>
<text x="1690" y="560" textLength="72" lengthAdjust="spacingAndGlyphs" style="fill:#e09a30">Cartoon_Meat</text>
<circle cx="1784" cy="556" r="4.500" fill="#7a7a7a"/><rect x="1796" y="551" width="11" height="9" fill="#eee"/><circle cx="1802" cy="555.500" r="3" fill="#222"/><rect x="1814" y="551" width="11" height="11" fill="#1e1e1e"/><path d="M1832 550v8h7M1834 555h7M1837 560h5" stroke="#ddd" fill="none"/><rect x="1850" y="555" width="8" height="7" fill="none" stroke="#222"/><path d="M1852 555v-3a2 2 0 0 1 4 0v3" fill="none" stroke="#222"/><rect x="1870" y="550" width="6" height="12" fill="#eee"/><path d="M1870 554h6M1870 558h6" stroke="#222"/><path d="M1891 550 1897 556 1891 562 1885 556Z" fill="none" stroke="#ddd"/>

<!-- scrollbar -->
<rect x="1649" y="1003" width="246" height="9" fill="#383838"/><rect x="1661" y="1004" width="179" height="8" rx="2" fill="#6c6c6c"/><path d="M1650 1007l5-3v7zM1894 1007l-5-3v7z" fill="#999"/>

<!-- right tabs -->
<rect x="1900" y="22" width="20" height="980" fill="#414141"/>
<rect x="1900" y="23" width="20" height="50" rx="2" fill="#6b6b6b"/>
<rect x="1900" y="78" width="20" height="40" fill="#4a4a4a"/><rect x="1900" y="120" width="20" height="92" fill="#4a4a4a"/><rect x="1900" y="214" width="20" height="60" fill="#4a4a4a"/><rect x="1900" y="510" width="20" height="68" fill="#4a4a4a"/><rect x="1900" y="572" width="20" height="42" rx="2" fill="#6b6b6b"/>
<text transform="translate(1906,31) rotate(90)" style="fill:#e89a30" textLength="36" lengthAdjust="spacingAndGlyphs">Objects</text>
<text transform="translate(1906,85) rotate(90)" style="fill:#7e7e7e" textLength="25" lengthAdjust="spacingAndGlyphs">Takes</text>
<text transform="translate(1906,125) rotate(90)" style="fill:#7e7e7e" textLength="81" lengthAdjust="spacingAndGlyphs">Content Browser</text>
<text transform="translate(1906,220) rotate(90)" style="fill:#7e7e7e" textLength="50" lengthAdjust="spacingAndGlyphs">Structure</text>
<text transform="translate(1906,517) rotate(90)" style="fill:#7e7e7e" textLength="53" lengthAdjust="spacingAndGlyphs">Attributes</text>
<text transform="translate(1906,579) rotate(90)" style="fill:#e89a30" textLength="30" lengthAdjust="spacingAndGlyphs">Layers</text>
</svg>
</body></html>
